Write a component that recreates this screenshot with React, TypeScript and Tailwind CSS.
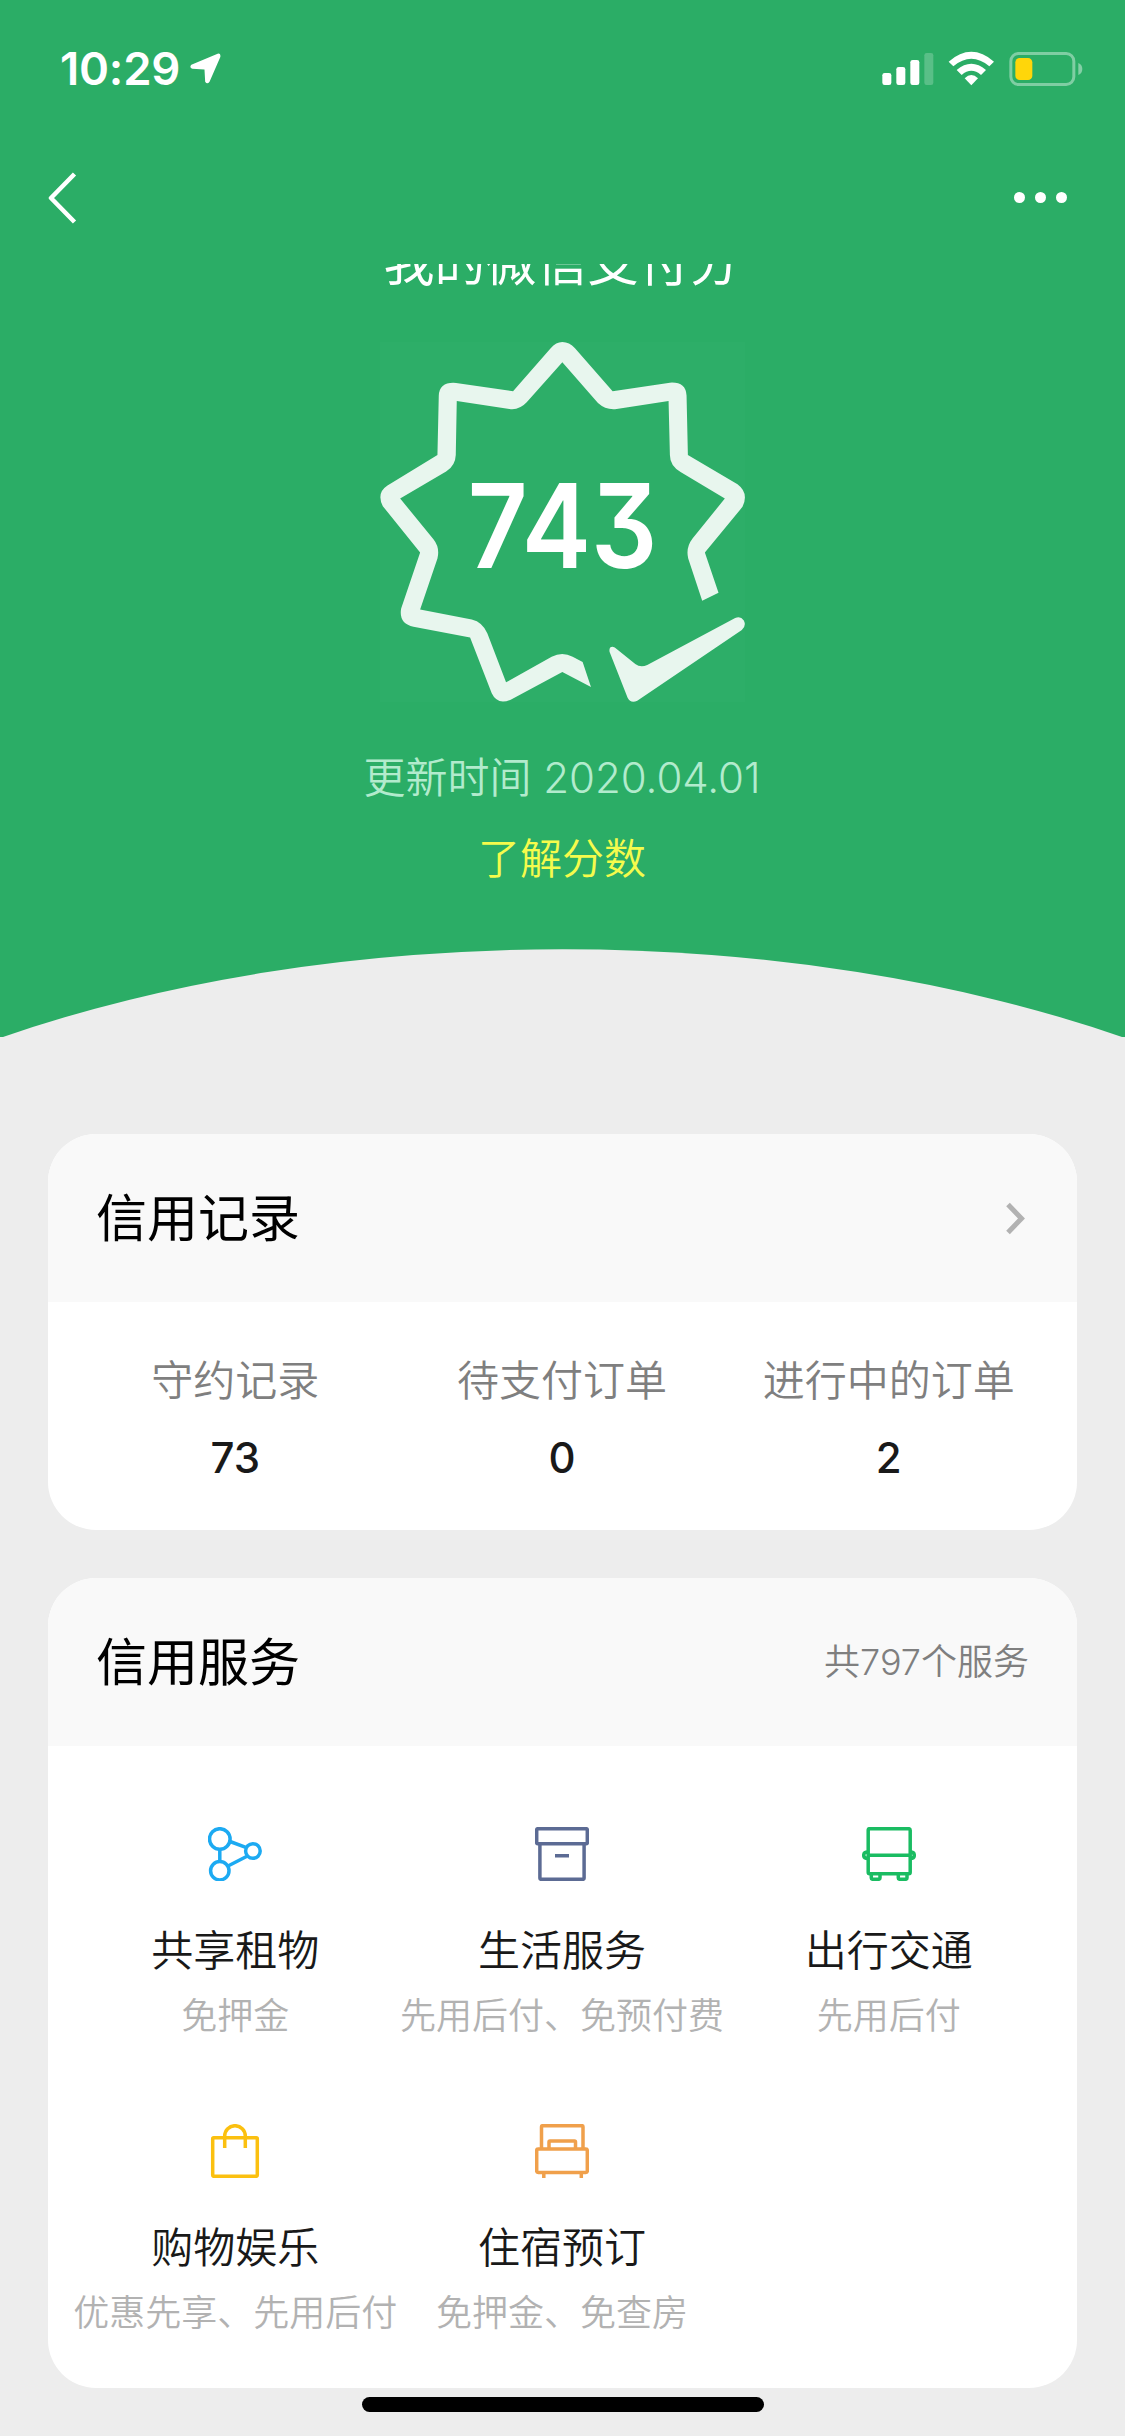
import type { ReactNode } from "react";

function StatusBar() {
  return (
    <div className="flex h-[138px] items-start justify-between pl-[60px] pr-[42px]">
      <div className="flex items-start pt-[40px]">
        <span className="w-[130px] text-[45.5px] font-semibold leading-[58px] tracking-[-0.2px] text-white">10:29</span>
        <svg className="mt-[13px] h-[31px] w-[31px]" viewBox="570 160 92 92" fill="#fff">
          <path d="M652 162Q662 160 660 172L628 245Q621 254 615 245L613 209L577 207Q567 203 574 195Z" />
        </svg>
      </div>
      <svg className="mt-[51px] h-[36px] w-[201px]" viewBox="245 153 603 108" fill="#fff">
        <rect x="246" y="219" width="27" height="36" rx="7" />
        <rect x="288" y="201" width="27" height="54" rx="7" />
        <rect x="330" y="180" width="27" height="75" rx="7" />
        <rect x="372" y="159" width="27" height="96" rx="7" opacity=".22" />
        <path d="M445 185Q513 126 581 185L567 199Q513 154 459 199Z" />
        <path d="M469 210Q513 172 557 210L542 225Q513 200 484 225Z" />
        <path d="M493 235Q513 215 533 235L513 256Z" />
        <rect x="631.500" y="160.500" width="189" height="93" rx="23" fill="none" stroke="#fff" strokeWidth="9" opacity=".4" />
        <rect x="645" y="174" width="51" height="66" rx="13" fill="#ffd60a" />
        <path d="M834 189Q846 194 846 207Q846 220 834 225Z" opacity=".42" />
      </svg>
    </div>
  );
}

function NavBar() {
  return (
    <div className="flex h-[126px] items-center justify-between pl-[48px] pr-[58px]">
      <svg className="mt-[-8px] h-[54px] w-[30px]" viewBox="0 0 30 54" fill="none" stroke="#fff" strokeWidth="4.500" strokeLinejoin="round">
        <path d="M26.500 4L3 28L26.500 52" />
      </svg>
      <div className="mt-[-7px] flex gap-[10px]">
        <i className="size-[11px] rounded-full bg-white" />
        <i className="size-[11px] rounded-full bg-white" />
        <i className="size-[11px] rounded-full bg-white" />
      </div>
    </div>
  );
}

function ScoreBadge() {
  return (
    <div className="relative mx-auto mt-[54px] flex h-[360px] w-[365px] items-center justify-center bg-[#2dae68]">
      <svg className="absolute inset-0 h-full w-full" viewBox="60 305 1095 1081" fill="#e8f6ee">
        <path d="M607 305Q628 305 645 324L758 453L930 427Q978 424 980 466L984 644L1133 732Q1168 758 1148 800L1035 937L1076 1058L1027 1082L985 955Q977 922 998 895L1095 775L962 695Q930 676 930 644L926 482L770 506Q738 510 714 488L607 366L500 486Q478 510 448 506L290 482L287 644Q286 676 258 694L120 775L220 897Q240 922 232 955L180 1108L335 1138Q368 1146 382 1180L438 1327L575 1250Q607 1234 638 1250L668 1266L693 1341L607 1296L452 1379Q412 1396 395 1360L330 1192L160 1160Q115 1150 123 1105L180 937L68 798Q48 758 82 736L232 644L236 466Q238 424 288 428L459 453L572 324Q588 305 607 305Z" />
        <path d="M749 1236Q746 1220 758 1220Q764 1220 772 1228L826 1272Q842 1284 862 1275L1126 1134Q1142 1127 1152 1141Q1160 1158 1146 1170L832 1382Q812 1391 803 1373Z" />
      </svg>
      <span className="relative mt-[8px] origin-center scale-x-[0.89] text-[117px] font-semibold leading-[120px] text-white [font-feature-settings:'cv09']">743</span>
    </div>
  );
}

function Card({ title, extra, children }: { title: string; extra: ReactNode; children: ReactNode }) {
  return (
    <section className="mx-[48px] overflow-hidden rounded-[48px] bg-white">
      <header className="flex h-[168px] items-center justify-between bg-[#f9f9f9] px-[48px]">
        <h2 className="mt-[2px] text-[51px] leading-[72px] text-black">{title}</h2>
        {extra}
      </header>
      {children}
    </section>
  );
}

const records = [
  { label: "守约记录", value: "73" },
  { label: "待支付订单", value: "0" },
  { label: "进行中的订单", value: "2" },
];

const services = [
  {
    name: "共享租物",
    note: "免押金",
    color: "text-[#1caaf2]",
    icon: (
      <>
        <circle cx="11.800" cy="12" r="10.300" />
        <circle cx="44.900" cy="24" r="7.300" />
        <circle cx="11.800" cy="43.700" r="9.200" />
        <path d="M11.800 22.300V34.500M22 14.500L38.500 20.700M20 39L39.500 29" />
      </>
    ),
  },
  {
    name: "生活服务",
    note: "先用后付、免预付费",
    color: "text-[#5c6b94]",
    icon: (
      <>
        <rect x="1.700" y="1.700" width="50.600" height="15" rx="1" />
        <path d="M4.900 16.500V51.300Q4.900 52.300 5.900 52.300H48.100Q49.100 52.300 49.100 51.300V16.500M20 28.700H34" />
      </>
    ),
  },
  {
    name: "出行交通",
    note: "先用后付",
    color: "text-[#1abc62]",
    icon: (
      <>
        <rect x="6.200" y="1.700" width="42" height="45" rx="1.500" />
        <path d="M6 28.300H48.500M6 25Q1.700 25 1.700 28.300Q1.700 31.500 6 31.500M48.500 25Q52.300 25 52.300 28.300Q52.300 31.500 48.500 31.500M9.300 47V51Q9.300 52.300 10.800 52.300H16.500Q18 52.300 18 51V47M36.300 47V51Q36.300 52.300 37.800 52.300H43.500Q45 52.300 45 51V47" />
      </>
    ),
  },
  {
    name: "购物娱乐",
    note: "优惠先享、先用后付",
    color: "text-[#fbc010]",
    icon: (
      <>
        <rect x="4.700" y="13.700" width="44.600" height="38.600" rx="1" />
        <path d="M16.700 24V12A10.300 10.300 0 0 1 37.300 12V24" />
      </>
    ),
  },
  {
    name: "住宿预订",
    note: "免押金、免查房",
    color: "text-[#f0a04b]",
    icon: (
      <>
        <rect x="1.700" y="25" width="50.600" height="23.500" rx="1.500" />
        <path d="M6.500 25V2.700Q6.500 1.700 7.500 1.700H47Q48 1.700 48 2.700V25M14 25V18Q14 17 15 17H39.500Q40.500 17 40.500 18V25M8.800 48.500V54M46.300 48.500V54" />
      </>
    ),
  },
];

export default function App() {
  return (
    <div className="relative flex h-[2436px] w-[1125px] flex-col overflow-hidden bg-[#ededed] [font-family:Inter,'Noto_Sans_CJK_SC',sans-serif]">
      <div className="h-[1037px] shrink-0 bg-[#2bad66]">
        <StatusBar />
        <NavBar />
        <div className="flex h-[24px] items-end justify-center overflow-hidden">
          <h1 className="mb-[-11px] mr-[1px] text-[51px] leading-[72px] text-white">我的微信支付分</h1>
        </div>
        <ScoreBadge />
        <p className="mt-[46px] pr-[1px] text-center text-[42px] font-[350] leading-[60px] text-[#b2ebcd]">更新时间 2020.04.01</p>
        <p className="mt-[21px] pr-[1px] text-center text-[42px] font-[350] leading-[60px] text-[#f5fb4c]">了解分数</p>
        <svg className="mt-[60px] block h-[89px] w-full" viewBox="0 0 1125 89" fill="#ededed">
          <path d="M0 89A984 494 0 0 1 1125 89Z" />
        </svg>
      </div>
      <div className="mt-[97px] flex flex-col gap-[48px]">
        <Card
          title="信用记录"
          extra={
            <svg className="mr-[2px] h-[33px] w-[21px]" viewBox="0 0 21 33" fill="none" stroke="#b2b2b2" strokeWidth="5">
              <path d="M2 2.500L15.500 16.500L2 30.500" />
            </svg>
          }
        >
          <div className="grid h-[228px] grid-cols-3 pl-[24px] pr-[25px] pt-[49px] text-center">
            {records.map((r) => (
              <div key={r.label}>
                <div className="text-[42px] font-[350] leading-[60px] text-[#7f7f7f]">{r.label}</div>
                <div className="mt-[17px] text-[42px] font-medium leading-[60px] text-[#191919]">{r.value}</div>
              </div>
            ))}
          </div>
        </Card>
        <Card title="信用服务" extra={<span className="text-[36px] font-[350] leading-[54px] text-[#7f7f7f]">共797个服务</span>}>
          <div className="grid h-[642px] auto-rows-[297px] grid-cols-3 pl-[24px] pr-[25px] pt-[81px]">
            {services.map((s) => (
              <div key={s.name} className="flex flex-col items-center whitespace-nowrap">
                <svg className={`size-[54px] ${s.color}`} viewBox="0 0 54 54" fill="none" stroke="currentColor" strokeWidth="3.500">
                  {s.icon}
                </svg>
                <div className="mt-[40px] text-[42px] font-[350] leading-[60px] text-[#191919]">{s.name}</div>
                <div className="mt-[10px] text-[36px] font-[350] leading-[51px] text-[#b2b2b2]">{s.note}</div>
              </div>
            ))}
          </div>
        </Card>
      </div>
      <div className="absolute bottom-[24px] left-[362px] h-[15px] w-[402px] rounded-full bg-black" />
    </div>
  );
}
